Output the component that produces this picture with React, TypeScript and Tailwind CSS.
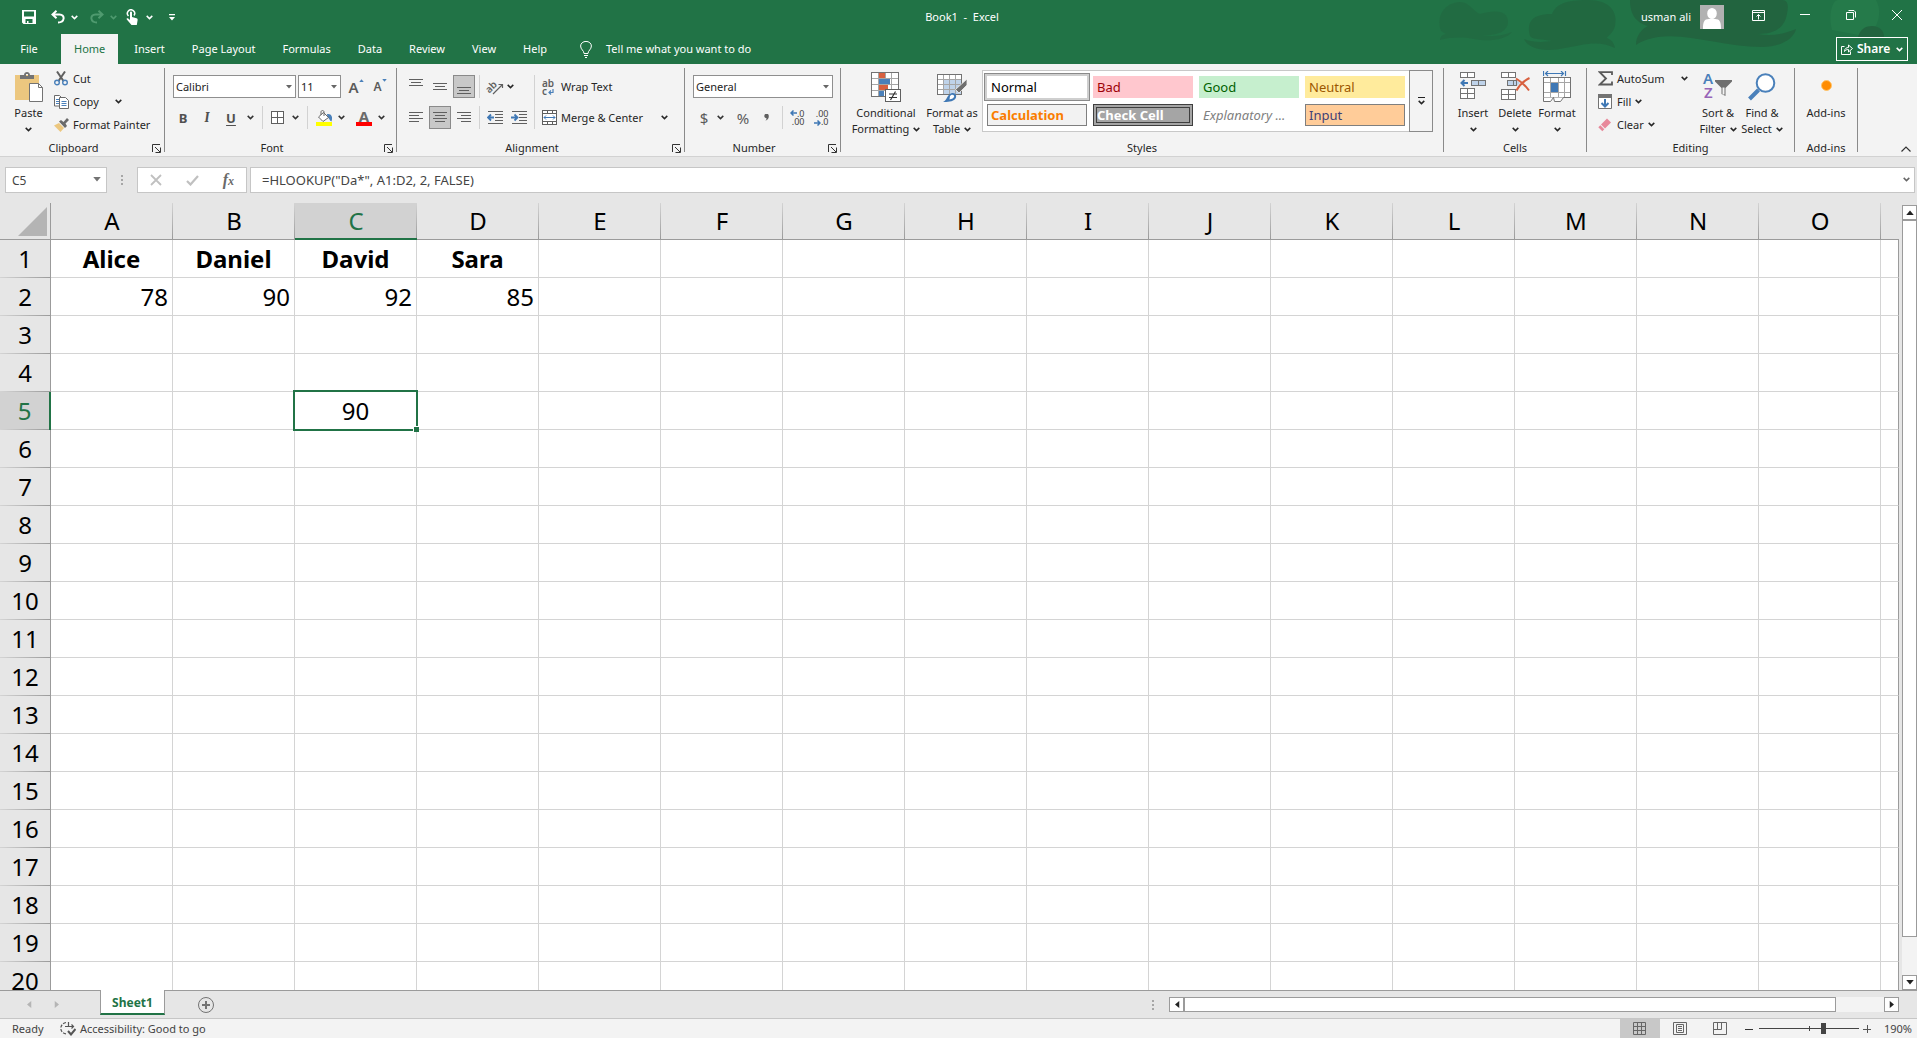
import type { ReactNode } from "react";
import clsx from "clsx";

const columns = "ABCDEFGHIJKLMNO".split("");
const rows = Array.from({ length: 20 }, (_, i) => i + 1);

const cells: Record<string, { value: string; className: string }> = {
  A1: { value: "Alice", className: "text-center font-bold" },
  B1: { value: "Daniel", className: "text-center font-bold" },
  C1: { value: "David", className: "text-center font-bold" },
  D1: { value: "Sara", className: "text-center font-bold" },
  A2: { value: "78", className: "text-right" },
  B2: { value: "90", className: "text-right" },
  C2: { value: "92", className: "text-right" },
  D2: { value: "85", className: "text-right" },
  C5: { value: "90", className: "text-center" },
};

const selected = { column: "C", row: 5 };

const tabs = [
  "Insert",
  "Page Layout",
  "Formulas",
  "Data",
  "Review",
  "View",
  "Help",
];

const cellStyles = [
  {
    name: "Normal",
    className:
      "pl-1 bg-white text-black ring-[3px] ring-[#cfcfcf] outline outline-[#8a8a8a] outline-offset-[2px]",
  },
  { name: "Bad", className: "pl-1 bg-[#ffc7ce] text-[#9c0006]" },
  { name: "Good", className: "pl-1 bg-[#c6efce] text-[#006100]" },
  { name: "Neutral", className: "pl-1 bg-[#ffeb9c] text-[#9c5700]" },
  {
    name: "Calculation",
    className:
      "border border-[#7f7f7f] bg-[#f2f2f2] pl-[3px] font-bold text-[#fa7d00]",
  },
  {
    name: "Check Cell",
    className:
      "border-4 border-double border-[#3f3f3f] bg-[#a5a5a5] font-bold text-white",
  },
  { name: "Explanatory ...", className: "pl-1 text-[#7f7f7f] italic" },
  {
    name: "Input",
    className: "border border-[#7f7f7f] bg-[#ffcc99] pl-[3px] text-[#3f3f76]",
  },
];

/* ---------- small drawing helpers ---------- */

const Chevron = ({ className }: { className?: string }) => (
  <svg
    viewBox="0 0 7 5"
    className={clsx("h-[5px] w-[7px] shrink-0", className)}
    fill="none"
    stroke="currentColor"
    strokeWidth="1.5"
  >
    <path d="M.7 .9 3.5 3.6 6.3 .9" />
  </svg>
);

const Caret = ({ className }: { className?: string }) => (
  <svg viewBox="0 0 6 4" className={className} fill="currentColor">
    <path d="M0 0h6L3 3.6z" />
  </svg>
);

const Lines = ({ items }: { items: [number, number, number][] }) => (
  <svg
    viewBox="0 0 16 16"
    className="size-4"
    stroke="#5f5f5f"
    shapeRendering="crispEdges"
  >
    {items.map(([x1, x2, y]) => (
      <path key={y} d={`M${x1} ${y}.5H${x2}`} />
    ))}
  </svg>
);

/* ---------- icons ---------- */

const SaveIcon = () => (
  <svg viewBox="0 0 14 14" className="size-3.5" fill="white">
    <path
      fillRule="evenodd"
      d="M0 0h14v14H1.5L0 12.500zM2 1.500V6.500h10V1.500zM3.500 9v4H5v-2h1.500v2h4V9z"
    />
  </svg>
);

const UndoIcon = ({ flip }: { flip?: boolean }) => (
  <svg
    viewBox="0 0 14 14"
    className={clsx("size-3.5", flip && "-scale-x-100")}
    fill="none"
    stroke="currentColor"
    strokeWidth="2"
  >
    <path d="M5.500 .800 1.500 4.500l4 3.700M2 4.500h6.500c6 0 5.500 8-1.500 8" />
  </svg>
);

const TouchIcon = () => (
  <svg viewBox="0 0 12 16" className="h-4 w-3" fill="none" stroke="white">
    <path d="M2.500 7A3.600 3.600 0 1 1 8 6.500" strokeWidth="1.500" />
    <path
      fill="white"
      stroke="none"
      d="M4 3.500c0-1.300 2-1.300 2 0V8l4.500 1.300c1 .3 1.300.9 1.100 1.900L10.800 16H5.500L.8 10.600c-.6-1 .5-1.700 1.400-1L4 11z"
    />
  </svg>
);

const PasteIcon = () => (
  <svg viewBox="0 0 28 30" className="h-[30px] w-7">
    <path fill="#ecc77f" d="M0 3h24v25H0z" />
    <path
      fill="#737373"
      d="M5 7V3h4c0-4 6-4 6 0h4v4zM11 2h2v2h-2z"
      fillRule="evenodd"
    />
    <path fill="white" stroke="#737373" d="M14.500 11.500h9l4 4v14h-13z" />
    <path fill="none" stroke="#737373" d="M23.500 11.500v4h4" />
  </svg>
);

const CutIcon = () => (
  <svg viewBox="0 0 14 15" className="h-[15px] w-3.5" fill="none">
    <path stroke="#5f5f5f" strokeWidth="2" d="M3 .5 9.500 10M11 .5 4.500 10" />
    <circle cx="3" cy="11.500" r="2.300" stroke="#4a80ba" strokeWidth="1.400" />
    <circle cx="11" cy="11.500" r="2.300" stroke="#4a80ba" strokeWidth="1.400" />
  </svg>
);

const CopyIcon = () => (
  <svg viewBox="0 0 15 14" className="h-3.5 w-[15px]" fill="white">
    <path stroke="#6a6a6a" d="M.5.5h5l2.500 2.500v8H.5z" />
    <path stroke="#4a80ba" d="M2 4.500h3M2 6.500h3M2 8.500h3" />
    <path stroke="#6a6a6a" d="M5.500 2.500h6l3 3v8h-9z" />
    <path stroke="#4a80ba" d="M7.500 6.500h5M7.500 8.500h5M7.500 10.500h5" />
  </svg>
);

const PainterIcon = () => (
  <svg viewBox="0 0 15 14" className="h-3.5 w-[15px]">
    <path fill="#ecc77f" d="M0 7.500 5 5l5 5-3.500 4z" />
    <path fill="#6a6a6a" d="M5 3.500 7 2l2.500 2L13 0l2 2-3.500 3.500L13 8l-2 2z" />
  </svg>
);

const FontSizeIcon = ({ grow }: { grow?: boolean }) => (
  <span className="flex h-4 items-center text-[#5a5a5a]">
    <span className={clsx("font-semibold", grow ? "text-[15px]" : "text-[12px]")}>
      A
    </span>
    <Caret
      className={clsx(
        "mb-3 h-[3px] w-[5px] text-[#4a80ba]",
        grow && "rotate-180",
      )}
    />
  </span>
);

const BordersIcon = () => (
  <svg
    viewBox="0 0 13 13"
    className="size-[13px]"
    fill="white"
    stroke="#5f5f5f"
    shapeRendering="crispEdges"
  >
    <path d="M.5.5h12v12H.5zM6.500.5v12M.5 6.500h12" />
  </svg>
);

const FillColorIcon = () => (
  <svg viewBox="0 0 16 16" className="size-4">
    <path fill="#4a80ba" d="M11 4c4.500-.5 6 2.500 4.500 7.500-2-.5-2-3.500-4-4z" />
    <path fill="white" stroke="#6a6a6a" d="m7.500 2.500 5 5L7 11.500 2.500 7z" />
    <path fill="none" stroke="#6a6a6a" d="M5 5V2c0-2 3-2 3 0v4" />
    <path fill="#ffff00" d="M0 12h16v4H0z" />
  </svg>
);

const FontColorIcon = () => (
  <span className="flex w-4 flex-col items-center border-b-4 border-[#ff0000] text-[15px] leading-3 font-bold text-[#6a6a6a]">
    A
  </span>
);

const OrientationIcon = () => (
  <svg viewBox="0 0 16 16" className="size-4 overflow-visible">
    <text
      x="-1"
      y="11"
      transform="rotate(-45 5 9)"
      fontSize="10"
      fontWeight="600"
      fill="#5f5f5f"
    >
      ab
    </text>
    <path
      fill="none"
      stroke="#5f5f5f"
      strokeWidth="1.200"
      d="M6 15 15 6M11.500 5.500H15.500V9"
    />
  </svg>
);

const IndentIcon = ({ right }: { right?: boolean }) => (
  <svg viewBox="0 0 16 14" className="h-3.5 w-4" fill="none">
    <path
      stroke="#5f5f5f"
      shapeRendering="crispEdges"
      d="M1 .5h15M8 3.500h8M8 6.500h8M8 9.500h8M1 12.500h15"
    />
    <path
      stroke="#3f78b5"
      strokeWidth="1.800"
      d={right ? "M0 6.500h6M3.500 3.500l3 3-3 3" : "M1 6.500h6M4 3.500l-3 3 3 3"}
    />
  </svg>
);

const WrapIcon = () => (
  <span className="relative flex w-3 flex-col items-start text-[10px] leading-[8px] font-semibold text-[#5f5f5f]">
    <span>ab</span>
    <span>c</span>
    <svg
      viewBox="0 0 6 6"
      className="absolute right-0 bottom-0 size-1.5"
      fill="none"
      stroke="#4a80ba"
      strokeWidth="1.200"
    >
      <path d="M5 0v3.500H1M3 1.500l-2 2 2 2" />
    </svg>
  </span>
);

const MergeIcon = () => (
  <svg viewBox="0 0 15 15" className="size-[15px]" fill="white">
    <path
      stroke="#5f5f5f"
      shapeRendering="crispEdges"
      d="M.5.5h14v14H.5zM.5 3.500h14M.5 11.500h14M5.500.5v3M10.500.5v3M5.500 11.500v3M10.500 11.500v3"
    />
    <path
      fill="none"
      stroke="#3f78b5"
      d="M2 7.500h11M4 5.500l-2 2 2 2M11 5.500l2 2-2 2"
    />
  </svg>
);

const DecimalIcon = ({ decrease }: { decrease?: boolean }) => (
  <span className="relative flex w-[15px] flex-col items-end text-[9px] leading-[8px] text-[#444]">
    <span>{decrease ? ".00" : ".0"}</span>
    <span>{decrease ? ".0" : ".00"}</span>
    <svg
      viewBox="0 0 7 6"
      className={clsx(
        "absolute left-0 h-1.5 w-[7px]",
        decrease ? "bottom-0 -scale-x-100" : "top-0",
      )}
      fill="none"
      stroke="#3f78b5"
      strokeWidth="1.500"
    >
      <path d="M1 3h6M3.500.5 1 3l2.500 2.500" />
    </svg>
  </span>
);

const ConditionalIcon = () => (
  <svg viewBox="0 0 30 30" className="size-[30px]">
    <g shapeRendering="crispEdges">
      <path fill="white" stroke="#737373" d="M.5.5h27v24H.5z" />
      <path
        stroke="#a6a6a6"
        fill="none"
        d="M7.500 1v23M14.500 1v23M20.500 1v23M1 6.500h26M1 12.500h26M1 18.500h26"
      />
      <path fill="#d8603f" d="M8 1h6v5H8zM8 13h9v5H8z" />
      <path fill="#4a80ba" d="M8 7h11v5H8zM8 19h5v5H8z" />
      <path fill="white" stroke="#5f5f5f" d="M14.500 17.500h15v12h-15z" />
    </g>
    <path
      stroke="#333"
      strokeWidth="1.200"
      d="M18 22h8M18 25.500h8M24.500 19.500l-5 8.500"
    />
  </svg>
);

const FormatTableIcon = () => (
  <svg viewBox="0 0 30 30" className="size-[30px]">
    <g shapeRendering="crispEdges">
      <path fill="white" stroke="#737373" d="M.5 2.500h24v20H.5z" />
      <path fill="#bfd3ea" d="M7 8h17v14H7z" />
      <path
        stroke="#a6a6a6"
        fill="none"
        d="M6.500 3v19M12.500 3v19M18.500 3v19M1 7.500h23M1 12.500h23M1 17.500h23"
      />
    </g>
    <path
      fill="#6f6f6f"
      stroke="#f3f3f3"
      strokeWidth=".8"
      d="M30 7v6l-8 8-3.500-3.500z"
    />
    <path fill="#3f78b5" d="M6 30c4-1 4-8 9-9 4-.5 5 3 3.500 5.500C16 30 10 30 6 30z" />
    <path fill="white" d="M13 24c2-2.500 5-1 4 1-1 1.500-2.500 2-4.500 2.500z" />
  </svg>
);

const InsertIcon = () => (
  <svg viewBox="0 0 28 30" className="h-[30px] w-7" fill="white">
    <g stroke="#737373" shapeRendering="crispEdges">
      <path d="M1.500.5h14v5h-14zM8.500.5v5M1.500 16.500h14v10h-14zM8.500 16.500v10M1.500 21.500h14" />
      <path fill="#bfd3ea" d="M12.500 8.500h14v5h-14zM19.500 8.500v5" />
    </g>
    <path
      fill="none"
      stroke="#3f78b5"
      strokeWidth="2"
      d="M2.500 11H9M5.500 8l-3 3 3 3"
    />
  </svg>
);

const DeleteIcon = () => (
  <svg viewBox="0 0 30 30" className="size-[30px]" fill="white">
    <g stroke="#737373" shapeRendering="crispEdges">
      <path d="M1.500.5h14v5h-14zM8.500.5v5M1.500 17.500h14v10h-14zM8.500 17.500v10M1.500 22.500h14" />
      <path fill="#bfd3ea" d="M7.500 8.500h9v5h-9zM13.500 8.500v5" />
    </g>
    <path fill="#bfd3ea" d="M17 8.500 20 11l-3 3z" />
    <path
      fill="none"
      stroke="#d8603f"
      strokeWidth="2"
      d="M16 6.500c5 3 9 6.500 13 12M29.500 6c-6 3-10 7-13 12.500"
    />
  </svg>
);

const FormatIcon = () => (
  <svg viewBox="0 0 28 32" className="h-8 w-7" fill="white">
    <path
      fill="none"
      stroke="#3f78b5"
      strokeWidth="1.200"
      d="M.5 0v5M22.500 0v5M2 2.500h19M5 0 2.500 2.500 5 5M18 0l2.500 2.500L18 5"
    />
    <g shapeRendering="crispEdges">
      <path stroke="#737373" d="M.5 6.500h27v20H.5z" />
      <path
        stroke="#a6a6a6"
        fill="none"
        d="M7.500 7v19M15.500 7v19M21.500 7v19M1 11.500h26M1 21.500h26"
      />
      <path fill="#3f78b5" d="M8 12h7v9H8z" />
    </g>
    <path stroke="#737373" d="M.5 26.500v4h7l3-4 1 4h6l3-4" />
  </svg>
);

const SigmaIcon = () => (
  <svg
    viewBox="0 0 15 15"
    className="size-[15px]"
    fill="none"
    stroke="#5a5a5a"
    strokeWidth="1.800"
  >
    <path d="M14 4V1.200H1.800L8 7.500l-6.200 6H14v-3" />
  </svg>
);

const FillIcon = () => (
  <svg viewBox="0 0 14 15" className="h-[15px] w-3.5">
    <path fill="white" stroke="#737373" d="M.5.5h13v14H.5z" />
    <path fill="#737373" d="M0 0h14v4H0z" />
    <path
      fill="none"
      stroke="#3f78b5"
      strokeWidth="2"
      d="M7 5v8M3.500 9 7 12.500 10.500 9"
    />
  </svg>
);

const EraserIcon = () => (
  <svg viewBox="0 0 14 14" className="size-3.5">
    <path fill="#e8899b" d="m9 .5 4 4-6 6-4-4z" />
    <path fill="#e8899b" d="m2.300 7.200 4 4-2 2-4-4z" />
  </svg>
);

const SortIcon = () => (
  <svg viewBox="0 0 30 30" className="size-[30px] overflow-visible">
    <g fontSize="15" fontWeight="600">
      <text x="0" y="12" fill="#4a80ba">
        A
      </text>
      <text x="1" y="26" fill="#9765b8">
        Z
      </text>
    </g>
    <path fill="#6f6f6f" d="M12 8h17v1.500L22.500 16v8l-4-2v-6L12 9.500z" />
    <path fill="#f3f3f3" d="M19.500 15.500h2v7h-2z" />
  </svg>
);

const FindIcon = () => (
  <svg viewBox="0 0 28 28" className="size-7">
    <path stroke="#4a80ba" strokeWidth="4" d="m1.500 26 9-9" />
    <circle
      cx="17.500"
      cy="10"
      r="8.800"
      fill="white"
      stroke="#4a80ba"
      strokeWidth="2"
    />
  </svg>
);

const LauncherIcon = () => (
  <svg viewBox="0 0 9 9" className="size-[9px]" fill="none" stroke="#333">
    <path d="M.5 8V.5H8M3 3l5 5M8.500 3.500v5h-5" />
  </svg>
);

/* Speech-bubble artwork behind the window controls */
const TitleArtwork = () => (
  <svg
    viewBox="0 0 537 64"
    className="pointer-events-none absolute top-0 right-0 h-16 w-[537px]"
    fill="#22643f"
  >
    <path
      opacity=".55"
      d="M61 31C56 16 64 3 80 2c9 0 14 10 20 12 14-4 28-4 28 8 0 10-12 14-26 13 10 2 20 1 30-3-6 8-24 10-38 7-12-2-22-2-34 1 0-4 4-6 6-6z"
    />
    <path
      opacity=".75"
      d="M150 36c-4-16 4-22 22-22 4-10 14-14 36-14 22 0 30 12 27 26-2 8-8 10-8 12 4 2 7 4 8 10-16-8-30-4-50 0-18 4-36 2-41-9 10 4 20 3 28 2-8-2-20-1-22-5z"
    />
    <path d="M250 0h152c8 0 6 10 4 18-4 12-14 16-28 16 12 2 24 1 38-5-2 10-16 18-34 18-40 0-72-14-104-10-10 2-16 4-22 8 0-10 6-16 12-19-14-4-18-14-18-26z" />
    <path
      fill="#257a4a"
      d="M452 30c-4-14 0-30 6-30h38c6 10 4 30-12 36z"
    />
    <path d="M478 37c2-8 8-11 14-11 8 0 12 5 12 11z" />
  </svg>
);

/* ---------- ribbon building blocks ---------- */

const Divider = () => <div className="my-1 w-px shrink-0 bg-[#8a8a8a]" />;

const Separator = ({ className }: { className?: string }) => (
  <span className={clsx("w-px self-stretch bg-[#d2d2d2]", className)} />
);

type GroupProps = {
  label: string;
  launcher?: boolean;
  className?: string;
  children: ReactNode;
};

const Group = ({ label, launcher, className, children }: GroupProps) => (
  <section aria-label={label} className={clsx("flex flex-col pt-1", className)}>
    <div className="flex flex-1 items-start">{children}</div>
    <div className="flex h-4 items-center">
      <span className="flex-1 text-center">{label}</span>
      {launcher && (
        <button
          aria-label={`${label} settings`}
          className="flex w-[17px] justify-end pr-[3px]"
        >
          <LauncherIcon />
        </button>
      )}
    </div>
  </section>
);

type LargeButtonProps = {
  icon: ReactNode;
  lines: string[];
  className?: string;
  menu?: boolean;
};

const LargeButton = ({ icon, lines, className, menu = true }: LargeButtonProps) => (
  <button className={clsx("flex flex-col items-center pt-1", className)}>
    <span className="mb-[3px] flex h-[30px] items-center">{icon}</span>
    <span>{lines[0]}</span>
    <span className="flex h-4 items-center gap-1 whitespace-nowrap">
      {lines[1]}
      {menu && <Chevron />}
    </span>
  </button>
);

type SmallButtonProps = {
  icon: ReactNode;
  text: string;
  chevron?: string;
};

const SmallButton = ({ icon, text, chevron }: SmallButtonProps) => (
  <button className="flex h-[23px] items-center whitespace-nowrap">
    <span className="flex w-[19px] items-center">{icon}</span>
    {text}
    {chevron && <Chevron className={chevron} />}
  </button>
);

type IconButtonProps = {
  label: string;
  className?: string;
  active?: boolean;
  children: ReactNode;
};

const IconButton = ({ label, className, active, children }: IconButtonProps) => (
  <button
    aria-label={label}
    className={clsx(
      "flex h-[23px] items-center justify-center",
      active && "border border-[#8a8a8a] bg-[#c8c8c8]",
      className ?? "w-[22px]",
    )}
  >
    {children}
  </button>
);

const ComboBox = ({
  label,
  value,
  className,
}: {
  label: string;
  value: string;
  className: string;
}) => (
  <div className={clsx("relative", className)}>
    <select
      aria-label={label}
      className="h-[23px] w-full appearance-none border border-[#8f8f8f] bg-white pl-0.5 text-[#222]"
    >
      <option>{value}</option>
    </select>
    <Caret className="pointer-events-none absolute top-2.5 right-1 h-1 w-1.5 text-[#666]" />
  </div>
);

const TitleBar = () => (
  <div className="relative flex h-[34px] items-center text-white">
    <div className="flex flex-1 items-center pl-[22px]">
      <button aria-label="Save" className="mr-[15px]">
        <SaveIcon />
      </button>
      <button aria-label="Undo" className="mr-1.5">
        <UndoIcon />
      </button>
      <Chevron className="mr-3" />
      <button aria-label="Redo" className="mr-1.5 text-[#4f9a6f]">
        <UndoIcon flip />
      </button>
      <Chevron className="mr-[9px] text-[#4f9a6f]" />
      <button aria-label="Touch mode" className="mr-2">
        <TouchIcon />
      </button>
      <Chevron className="mr-4" />
      <button aria-label="Customize toolbar">
        <svg viewBox="0 0 6 8" className="h-2 w-1.5" fill="white">
          <path d="M0 1h6v1.200H0zM0 4h6L3 7.500z" />
        </svg>
      </button>
    </div>
    <h1 className="whitespace-pre">{"Book1  -  Excel"}</h1>
    <div className="flex flex-1 items-center justify-end pr-[15px]">
      <button className="flex items-center gap-[9px]">
        usman ali
        <svg viewBox="0 0 24 24" className="size-6">
          <path fill="#b1b1b1" d="M0 0h24v24H0z" />
          <path
            fill="white"
            d="M3 24c0-7 1-10 6-10h6c5 0 6 3 6 10zM12 3a4.800 5.500 0 0 1 0 11 4.800 5.500 0 0 1 0-11z"
          />
        </svg>
      </button>
      <button aria-label="Ribbon display options" className="mb-1 ml-7">
        <svg viewBox="0 0 13 11" className="h-[11px] w-[13px]" fill="none" stroke="white">
          <path d="M.5.5h12v10H.5zM.5 2.500h12M6.500 9.500V4.500M4.500 6.500l2-2 2 2" />
        </svg>
      </button>
      <button aria-label="Minimize" className="mb-1 ml-[35px]">
        <svg viewBox="0 0 10 10" className="size-2.5" stroke="white">
          <path d="M0 4.500h10" />
        </svg>
      </button>
      <button aria-label="Restore" className="mb-1 ml-9">
        <svg viewBox="0 0 10 10" className="size-2.5" fill="none" stroke="white">
          <path d="M.5 2.500h7v7h-7zM2.500.5H8L9.500 2v5.500" />
        </svg>
      </button>
      <button aria-label="Close" className="mb-1 ml-9">
        <svg viewBox="0 0 10 10" className="size-2.5" stroke="white">
          <path d="m0 0 10 10M10 0 0 10" />
        </svg>
      </button>
    </div>
  </div>
);

const TabStrip = () => (
  <nav className="relative flex h-[30px] items-stretch text-white">
    <button className="w-[61px] pr-[3px]">File</button>
    <button className="mr-1 bg-[#f3f3f3] px-[13px] text-[#217346]">Home</button>
    {tabs.map((tab) => (
      <button key={tab} className="mr-[3px] px-3">
        {tab}
      </button>
    ))}
    <button className="ml-[18px] flex items-center gap-3.5">
      <svg viewBox="0 0 12 17" className="h-[17px] w-3" fill="none" stroke="white">
        <path d="M4 12.500c0-3-3.400-4-3.400-7.500a5.400 4.600 0 0 1 10.800 0c0 3.500-3.400 4.500-3.400 7.500zM4 14.500h4M5 16.500h2" />
      </svg>
      Tell me what you want to do
    </button>
    <button className="mt-[3px] mr-[9px] ml-auto flex h-6 w-[72px] items-center border border-white pl-1 text-[12px] font-semibold">
      <svg viewBox="0 0 12 12" className="mr-1 size-3" fill="none" stroke="white">
        <path d="M3.500 3.500h-3v8h9v-3M3.500 8.500c0-3 2-4 4-4V2l4 3.500-4 3.500V6.500c-2 0-3 .5-4 2z" />
      </svg>
      Share
      <Chevron className="ml-1.5" />
    </button>
  </nav>
);

const ClipboardGroup = () => (
  <Group label="Clipboard" launcher className="w-[164px] shrink-0">
    <LargeButton
      icon={<PasteIcon />}
      lines={["Paste"]}
      className="ml-3 w-[33px]"
    />
    <div className="-mt-px ml-[9px] flex flex-col items-start">
      <SmallButton icon={<CutIcon />} text="Cut" />
      <SmallButton icon={<CopyIcon />} text="Copy" chevron="ml-4" />
      <SmallButton icon={<PainterIcon />} text="Format Painter" />
    </div>
  </Group>
);

const FontGroup = () => (
  <Group label="Font" launcher className="w-[231px] shrink-0">
    <div className="flex flex-col gap-2 pt-[7px] pl-2">
      <div className="flex items-center">
        <ComboBox label="Font" value="Calibri" className="mr-0.5 w-[123px]" />
        <ComboBox label="Font size" value="11" className="mr-1 w-[43px]" />
        <IconButton label="Increase font size">
          <FontSizeIcon grow />
        </IconButton>
        <IconButton label="Decrease font size" className="ml-0.5 w-[22px]">
          <FontSizeIcon />
        </IconButton>
      </div>
      <div className="flex items-center text-[13px] text-[#505050]">
        <IconButton label="Bold" className="w-5 font-bold">
          B
        </IconButton>
        <IconButton label="Italic" className="ml-1 w-5 font-serif text-[14px] font-bold italic">
          I
        </IconButton>
        <IconButton label="Underline" className="ml-1 w-5 font-bold underline underline-offset-2">
          U
        </IconButton>
        <Chevron className="ml-1.5 text-[#333]" />
        <Separator className="mx-2" />
        <BordersIcon />
        <Chevron className="ml-2 text-[#333]" />
        <Separator className="mx-2" />
        <FillColorIcon />
        <Chevron className="mr-[11px] ml-1.5 text-[#333]" />
        <FontColorIcon />
        <Chevron className="ml-1.5 text-[#333]" />
      </div>
    </div>
  </Group>
);

const AlignmentGroup = () => (
  <Group label="Alignment" launcher className="w-[287px] shrink-0">
    <div className="flex pt-[7px] pl-2">
      <div className="grid grid-cols-3 gap-x-0.5 gap-y-2">
        <IconButton label="Top align">
          <Lines items={[[1, 15, 0], [3, 13, 3], [1, 15, 6]]} />
        </IconButton>
        <IconButton label="Middle align">
          <Lines items={[[1, 15, 4], [3, 13, 7], [1, 15, 10]]} />
        </IconButton>
        <IconButton label="Bottom align" active>
          <Lines items={[[1, 15, 8], [3, 13, 11], [1, 15, 14]]} />
        </IconButton>
        <IconButton label="Align left">
          <Lines items={[[1, 15, 2], [1, 11, 5], [1, 15, 8], [1, 11, 11]]} />
        </IconButton>
        <IconButton label="Center" active>
          <Lines items={[[1, 15, 2], [3, 13, 5], [1, 15, 8], [3, 13, 11]]} />
        </IconButton>
        <IconButton label="Align right">
          <Lines items={[[1, 15, 2], [5, 15, 5], [1, 15, 8], [5, 15, 11]]} />
        </IconButton>
      </div>
      <div className="ml-1 flex flex-col gap-2">
        <div className="flex h-[23px] items-center">
          <Separator className="mr-[7px]" />
          <OrientationIcon />
          <Chevron className="ml-1" />
        </div>
        <div className="flex h-[23px] items-center">
          <Separator className="mr-[7px]" />
          <button aria-label="Decrease indent" className="mr-2">
            <IndentIcon />
          </button>
          <button aria-label="Increase indent">
            <IndentIcon right />
          </button>
        </div>
      </div>
      <Separator className="mr-[7px] ml-[7px]" />
      <div className="flex flex-col gap-2">
        <SmallButton icon={<WrapIcon />} text="Wrap Text" />
        <SmallButton icon={<MergeIcon />} text="Merge & Center" chevron="ml-[18px]" />
      </div>
    </div>
  </Group>
);

const NumberGroup = () => (
  <Group label="Number" launcher className="w-[155px] shrink-0">
    <div className="flex flex-col gap-2 pt-[7px] pl-2">
      <ComboBox label="Number format" value="General" className="w-[140px]" />
      <div className="flex items-center text-[15px] text-[#5a5a5a]">
        <IconButton label="Accounting format">$</IconButton>
        <Chevron className="ml-0.5 text-[#333]" />
        <IconButton label="Percent style" className="ml-2 w-[22px]">
          %
        </IconButton>
        <IconButton label="Comma style" className="ml-0.5 w-5">
          <svg viewBox="0 0 5 7" className="h-[7px] w-[5px]" fill="#5f5f5f">
            <path d="M.3 2a2.200 2.200 0 0 1 4.500 0c0 2.500-1 4-3.600 4.800C2.300 6 2.600 5 2.500 4.200 1.300 4.200.3 3.300.3 2z" />
          </svg>
        </IconButton>
        <Separator className="mr-1.5 ml-1.5" />
        <IconButton label="Increase decimal" className="mr-2 w-4">
          <DecimalIcon />
        </IconButton>
        <IconButton label="Decrease decimal" className="w-4">
          <DecimalIcon decrease />
        </IconButton>
      </div>
    </div>
  </Group>
);

const StylesGroup = () => (
  <Group label="Styles" className="min-w-0 flex-1">
    <LargeButton
      icon={<ConditionalIcon />}
      lines={["Conditional", "Formatting"]}
      className="ml-[9px] w-[72px]"
    />
    <LargeButton
      icon={<FormatTableIcon />}
      lines={["Format as", "Table"]}
      className="w-[60px]"
    />
    <div className="mt-0.5 mr-2.5 flex h-[62px] flex-1">
      <div className="grid flex-1 grid-cols-4 gap-1.5 border border-r-0 border-[#c8c8c8] bg-white px-1 py-[5px] text-[13px]">
        {cellStyles.map(({ name, className }) => (
          <button
            key={name}
            className={clsx(
              "flex h-[22px] items-center overflow-hidden whitespace-nowrap",
              className,
            )}
          >
            {name}
          </button>
        ))}
      </div>
      <button
        aria-label="More styles"
        className="flex w-6 flex-col items-center justify-center gap-0.5 border border-[#8a8a8a]"
      >
        <span className="h-px w-[7px] bg-[#222]" />
        <Chevron />
      </button>
    </div>
  </Group>
);

const CellsGroup = () => (
  <Group label="Cells" className="w-[142px] shrink-0">
    <LargeButton icon={<InsertIcon />} lines={["Insert"]} className="ml-2 w-[42px]" />
    <LargeButton icon={<DeleteIcon />} lines={["Delete"]} className="w-[42px]" />
    <LargeButton icon={<FormatIcon />} lines={["Format"]} className="w-[42px]" />
  </Group>
);

const EditingGroup = () => (
  <Group label="Editing" className="w-[207px] shrink-0">
    <div className="-mt-px ml-[11px] flex w-[94px] flex-col items-start">
      <SmallButton icon={<SigmaIcon />} text="AutoSum" chevron="ml-4" />
      <SmallButton icon={<FillIcon />} text="Fill" chevron="ml-1" />
      <SmallButton icon={<EraserIcon />} text="Clear" chevron="ml-1" />
    </div>
    <LargeButton
      icon={<SortIcon />}
      lines={["Sort &", "Filter"]}
      className="ml-1 w-11"
    />
    <LargeButton
      icon={<FindIcon />}
      lines={["Find &", "Select"]}
      className="w-11"
    />
  </Group>
);

const AddInsGroup = () => (
  <Group label="Add-ins" className="w-[62px] shrink-0">
    <LargeButton
      icon={
        <span className="mb-1 size-[11px] rounded-full border border-[#ffc46b] bg-[#ff8c00]" />
      }
      lines={["Add-ins"]}
      menu={false}
      className="w-full"
    />
  </Group>
);

const FormulaBar = () => (
  <div className="flex h-[46px] items-center bg-[#e6e6e6] pr-0.5 pl-[5px] text-[#444]">
    <div className="relative w-[102px]">
      <input
        aria-label="Name box"
        defaultValue="C5"
        className="h-[26px] w-full border border-[#c6c6c6] bg-white pl-1.5 text-[12px]"
      />
      <Caret className="absolute top-2.5 right-1.5 h-[5px] w-2 text-[#737373]" />
    </div>
    <div className="mx-3.5 flex w-0.5 flex-col gap-0.5">
      <span className="size-0.5 bg-[#a6a6a6]" />
      <span className="size-0.5 bg-[#a6a6a6]" />
      <span className="size-0.5 bg-[#a6a6a6]" />
    </div>
    <div className="mr-[3px] flex h-[26px] w-[110px] items-center justify-between border border-[#c6c6c6] bg-white px-3">
      <button aria-label="Cancel">
        <svg viewBox="0 0 12 12" className="size-3" stroke="#c0c0c0" strokeWidth="1.800">
          <path d="m1 1 10 10M11 1 1 11" />
        </svg>
      </button>
      <button aria-label="Enter">
        <svg viewBox="0 0 13 11" className="h-[11px] w-[13px]" fill="none" stroke="#c0c0c0" strokeWidth="2.200">
          <path d="m1 6 3.500 3.500L12 1" />
        </svg>
      </button>
      <button
        aria-label="Insert function"
        className="font-['Liberation_Serif',serif] text-[16px] leading-4 font-bold text-[#6a6a6a] italic"
      >
        f<span className="text-[12px]">x</span>
      </button>
    </div>
    <div className="relative flex-1">
      <input
        aria-label="Formula"
        defaultValue={'=HLOOKUP("Da*", A1:D2, 2, FALSE)'}
        className="h-[26px] w-full border border-[#c6c6c6] bg-white pl-[11px] text-[13px]"
      />
      <Chevron className="absolute top-2.5 right-[5px] text-[#666]" />
    </div>
  </div>
);

const Sheet = () => (
  <div className="flex-1 overflow-hidden bg-[#e6e6e6]">
    <table className="w-full table-fixed border-separate border-spacing-0 text-[24px] leading-8 text-black">
      <thead>
        <tr className="h-[37px]">
          <th className="w-[51px] border-r border-b border-[#9b9b9b] p-0">
            <svg viewBox="0 0 30 30" className="ml-auto mr-[3px] size-[29px]" fill="#b4b4b4">
              <path d="M30 0v30H0z" />
            </svg>
          </th>
          {columns.map((column) => (
            <th
              key={column}
              className={clsx(
                "w-[122px] bg-[linear-gradient(to_bottom,#d4d4d4,#9b9b9b)] bg-[length:1px_100%] bg-right bg-no-repeat p-0 font-normal",
                column === selected.column
                  ? "border-b-2 border-[#217346] bg-[#d2d2d2] text-[#217346]"
                  : "border-b border-[#9b9b9b]",
              )}
            >
              {column}
            </th>
          ))}
          <th className="border-b border-[#9b9b9b] p-0" />
        </tr>
      </thead>
      <tbody>
        {rows.map((row) => (
          <tr key={row} className="h-[38px]">
            <th
              className={clsx(
                "bg-[linear-gradient(to_right,#d4d4d4,#9b9b9b)] bg-[length:100%_1px] bg-bottom bg-no-repeat p-0 font-normal",
                row === selected.row
                  ? "border-r-2 border-[#217346] bg-[#d2d2d2] text-[#217346]"
                  : "border-r border-[#9b9b9b]",
              )}
            >
              {row}
            </th>
            {columns.map((column) => {
              const cell = cells[`${column}${row}`];
              return (
                <td
                  key={column}
                  className={clsx(
                    "border-r border-b border-[#d4d4d4] bg-white px-1 py-0",
                    cell?.className,
                    row === selected.row && column === selected.column && "relative",
                  )}
                >
                  {cell?.value}
                  {row === selected.row && column === selected.column && (
                    <span className="absolute -inset-0.5 border-2 border-[#217346]">
                      <span className="absolute -right-[3px] -bottom-[3px] size-1.5 border-t border-l border-white bg-[#217346]" />
                    </span>
                  )}
                </td>
              );
            })}
            <td className="border-r border-b border-r-[#9b9b9b] border-b-[#d4d4d4] bg-white p-0" />
          </tr>
        ))}
      </tbody>
    </table>
  </div>
);

const scrollButton =
  "flex size-[15px] shrink-0 items-center justify-center border border-[#9b9b9b] bg-white text-[#222]";

const VerticalScroll = () => (
  <div className="flex w-[18px] flex-col bg-[#e6e6e6] pt-0.5 pl-[3px]">
    <button aria-label="Scroll up" className={scrollButton}>
      <Caret className="h-[5px] w-2 rotate-180" />
    </button>
    <div className="flex-1 bg-[#f3f3f3]">
      <div className="h-[95%] border border-[#9b9b9b] bg-white" />
    </div>
    <button aria-label="Scroll down" className={scrollButton}>
      <Caret className="h-[5px] w-2" />
    </button>
  </div>
);

const SheetTabs = () => (
  <div className="flex h-7 items-center border-t border-[#9b9b9b] bg-[#e6e6e6]">
    <div className="flex w-[100px] gap-5 pl-[25px] text-[#b5b5b5]">
      <button aria-label="Previous sheet">
        <Caret className="h-[5px] w-2 rotate-90" />
      </button>
      <button aria-label="Next sheet">
        <Caret className="h-[5px] w-2 -rotate-90" />
      </button>
    </div>
    <button className="-mt-px h-[25px] w-[65px] self-start border-x border-b-2 border-x-[#9b9b9b] border-b-[#217346] bg-white pt-0.5 text-[12px] font-bold text-[#217346]">
      Sheet1
    </button>
    <button aria-label="New sheet" className="ml-[33px]">
      <svg viewBox="0 0 16 16" className="size-4" fill="none" stroke="#737373">
        <circle cx="8" cy="8" r="7.500" />
        <path strokeWidth="2" d="M8 4v8M4 8h8" />
      </svg>
    </button>
    <div className="mr-[15px] ml-auto flex w-0.5 flex-col gap-0.5">
      <span className="size-0.5 bg-[#a6a6a6]" />
      <span className="size-0.5 bg-[#a6a6a6]" />
      <span className="size-0.5 bg-[#a6a6a6]" />
    </div>
    <div className="mr-[18px] flex w-[730px] bg-[#f3f3f3]">
      <button aria-label="Scroll left" className={scrollButton}>
        <Caret className="h-[5px] w-2 rotate-90" />
      </button>
      <div className="flex-1 pr-12">
        <div className="h-[15px] border border-[#9b9b9b] bg-white" />
      </div>
      <button aria-label="Scroll right" className={scrollButton}>
        <Caret className="h-[5px] w-2 -rotate-90" />
      </button>
    </div>
  </div>
);

const StatusBar = () => (
  <footer className="flex h-5 items-center border-t border-[#c6c6c6] bg-[#f3f3f3] pr-[5px] pl-3 text-[#444]">
    <span className="w-12">Ready</span>
    <button className="flex items-center gap-1">
      <svg viewBox="0 0 16 15" className="h-[15px] w-4" fill="none" stroke="#555">
        <path strokeDasharray="3 1.500" strokeWidth="1.200" d="M6 1.500C-1 3-1 12 6.500 13" />
        <path strokeWidth="1.200" d="M8.500 1v5M5 5.500h8M11.500 3.500l2 2-2 2" />
        <path strokeWidth="2" d="m8 10 3 3.500L15.500 8" />
      </svg>
      Accessibility: Good to go
    </button>
    <div className="ml-auto flex h-full items-center">
      <button aria-label="Normal view" className="flex h-full w-10 items-center justify-center bg-[#c8c8c8]">
        <svg viewBox="0 0 13 13" className="size-[13px]" fill="none" stroke="#666">
          <path d="M.5.5h12v12H.5zM4.500.5v12M8.500.5v12M.5 4.500h12M.5 8.500h12" />
        </svg>
      </button>
      <button aria-label="Page layout view" className="flex w-10 justify-center">
        <svg viewBox="0 0 14 13" className="h-[13px] w-3.5" fill="none" stroke="#666">
          <path d="M.5.5h13v12H.5zM3.500 2.500h7v8h-7zM5 4.500h4M5 6.500h4M5 8.500h4" />
        </svg>
      </button>
      <button aria-label="Page break view" className="flex w-10 justify-center">
        <svg viewBox="0 0 14 13" className="h-[13px] w-3.5" fill="none" stroke="#666">
          <path d="M.5.5h13v12H.5zM4.500.5v7M8.500.5v7M.5 7.500h8" />
        </svg>
      </button>
      <button aria-label="Zoom out" className="mr-1.5 ml-[5px]">
        <svg viewBox="0 0 8 8" className="size-2" stroke="#333">
          <path d="M0 4.500h8" />
        </svg>
      </button>
      <div className="relative flex items-center">
        <span className="absolute left-1/2 h-[5px] w-px bg-[#444]" />
        <input
          type="range"
          aria-label="Zoom"
          defaultValue={65}
          className="relative h-[11px] w-[100px] appearance-none bg-[linear-gradient(#444,#444)] bg-[length:100%_1px] bg-center bg-no-repeat [&::-webkit-slider-thumb]:h-[11px] [&::-webkit-slider-thumb]:w-[5px] [&::-webkit-slider-thumb]:appearance-none [&::-webkit-slider-thumb]:bg-[#444]"
        />
      </div>
      <button aria-label="Zoom in" className="mr-[13px] ml-1">
        <svg viewBox="0 0 8 8" className="size-2" stroke="#555">
          <path d="M0 4.500h8M4.500 0v8" />
        </svg>
      </button>
      <span>190%</span>
    </div>
  </footer>
);

export default function App() {
  return (
    <div className="flex h-screen flex-col overflow-hidden bg-[#e6e6e6] font-['Noto_Sans','Open_Sans',sans-serif] text-[11px] leading-4 text-[#262626]">
      <header className="relative bg-[#217346]">
        <TitleArtwork />
        <TitleBar />
        <TabStrip />
      </header>
      <div className="flex h-[93px] border-b border-[#d2d2d2] bg-[#f3f3f3]">
        <ClipboardGroup />
        <Divider />
        <FontGroup />
        <Divider />
        <AlignmentGroup />
        <Divider />
        <NumberGroup />
        <Divider />
        <StylesGroup />
        <Divider />
        <CellsGroup />
        <Divider />
        <EditingGroup />
        <Divider />
        <AddInsGroup />
        <Divider />
        <div className="flex w-[59px] items-end justify-end pr-1.5 pb-1">
          <button aria-label="Collapse ribbon">
            <svg viewBox="0 0 10 6" className="h-1.5 w-2.5" fill="none" stroke="#333" strokeWidth="1.200">
              <path d="m.5 5.500 4.500-4.500 4.500 4.500" />
            </svg>
          </button>
        </div>
      </div>
      <FormulaBar />
      <main className="flex min-h-0 flex-1">
        <Sheet />
        <VerticalScroll />
      </main>
      <SheetTabs />
      <StatusBar />
    </div>
  );
}
